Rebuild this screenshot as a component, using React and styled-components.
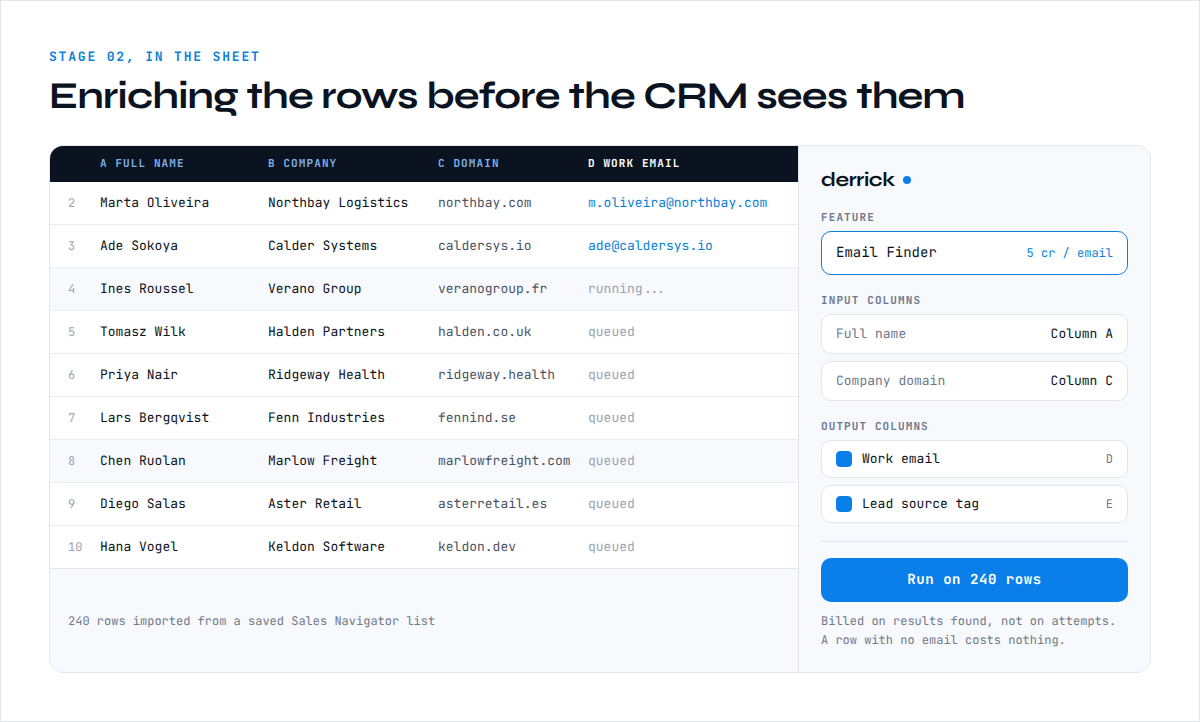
import React, { useState } from "react";
import styled, { createGlobalStyle, ThemeProvider } from "styled-components";

const theme = {
  ink: "#0b1220",
  blue: "#0a7fea",
  blueText: "#0a7fd8",
  headBlue: "#7fb0ea",
  body: "#4b5363",
  muted: "#6f7889",
  faint: "#9aa3b2",
  line: "#e0e5ed",
  rowLine: "#ebeff5",
  tint: "#f7f9fd",
  mono: '"JetBrains Mono", "DejaVu Sans Mono", "Liberation Mono", monospace',
  display: '"Syne", "Inter", "Liberation Sans", sans-serif',
};

const GlobalStyle = createGlobalStyle`
  *, *::before, *::after { box-sizing: border-box; }
  body { margin: 0; background: #fff; text-rendering: geometricPrecision; }
  button, input, select { font: inherit; color: inherit; margin: 0; text-rendering: inherit; }
`;

const Page = styled.main`
  display: flex;
  flex-direction: column;
  min-height: 100vh;
  padding: 48px;
  border: 1px solid #e3e5e8;
  font-family: ${({ theme }) => theme.mono};
  font-size: 13px;
  line-height: 18px;
  color: ${({ theme }) => theme.ink};
`;

const Heading = styled.header`
  display: flex;
  flex-direction: column;
  gap: 10px;
  margin-bottom: 26px;
`;

const Eyebrow = styled.p`
  margin: 0;
  font-weight: 600;
  line-height: 16px;
  letter-spacing: 0.14em;
  text-transform: uppercase;
  color: ${({ theme }) => theme.blueText};
`;

const Title = styled.h1`
  margin: 0;
  font-family: ${({ theme }) => theme.display};
  font-size: 38px;
  font-weight: 700;
  line-height: 44px;
  letter-spacing: -0.02em;
`;

const Panel = styled.section`
  display: grid;
  grid-template-columns: minmax(0, 1fr) 352px;
  flex: 1;
  border: 1px solid ${({ theme }) => theme.line};
  border-radius: 14px;
  overflow: hidden;
`;

const Sheet = styled.div`
  display: flex;
  flex-direction: column;
`;

const Table = styled.table`
  width: 100%;
  table-layout: fixed;
  border-spacing: 0;
`;

const Col = styled.col`
  width: ${({ $width }) => $width};
`;

const HeadCell = styled.th`
  height: 36px;
  padding: 0;
  background: ${({ theme }) => theme.ink};
  color: ${({ theme, $active }) => ($active ? "#fff" : theme.headBlue)};
  font-size: 11px;
  font-weight: 600;
  line-height: 16px;
  letter-spacing: 0.1em;
  text-align: left;
  text-transform: uppercase;
  white-space: nowrap;
`;

const Row = styled.tr`
  background: ${({ theme, $tinted }) => ($tinted ? theme.tint : "#fff")};

  &:last-child > * {
    border-bottom-color: ${({ theme }) => theme.line};
  }
`;

const Cell = styled.td`
  height: 43px;
  padding: 0;
  border-bottom: 1px solid ${({ theme }) => theme.rowLine};
  color: ${({ theme, $tone }) => theme[$tone || "ink"]};
  white-space: nowrap;
`;

const RowNumber = styled(Cell).attrs({ as: "th", scope: "row" })`
  padding-left: 18px;
  font-size: 12px;
  font-weight: 400;
  text-align: left;
  color: ${({ theme }) => theme.faint};
`;

const EmailLink = styled.a`
  color: ${({ theme }) => theme.blueText};
  text-decoration: none;
`;

const SheetFooter = styled.footer`
  display: flex;
  flex: 1;
  align-items: center;
  padding: 18px;
  background: ${({ theme }) => theme.tint};
  color: ${({ theme }) => theme.muted};
  font-size: 12px;
`;

const Sidebar = styled.aside`
  display: flex;
  flex-direction: column;
  gap: 18px;
  padding: 22px;
  border-left: 1px solid ${({ theme }) => theme.line};
  background: ${({ theme }) => theme.tint};
`;

const Brand = styled.div`
  display: flex;
  align-items: center;
  gap: 8px;
  font-family: ${({ theme }) => theme.display};
  font-size: 20px;
  font-weight: 700;
  line-height: 24px;
  letter-spacing: -0.02em;

  &::after {
    content: "";
    width: 8px;
    height: 8px;
    border-radius: 50%;
    background: ${({ theme }) => theme.blue};
  }
`;

const Group = styled.div`
  display: flex;
  flex-direction: column;
  gap: 7px;
`;

const GroupLabel = styled.span`
  margin-bottom: -2px;
  font-size: 11px;
  font-weight: 600;
  line-height: 16px;
  letter-spacing: 0.1em;
  text-transform: uppercase;
  color: ${({ theme }) => theme.muted};
`;

const Field = styled.label`
  display: flex;
  align-items: center;
  gap: 10px;
  height: ${({ $height }) => $height};
  padding: 0 14px;
  border: 1px solid ${({ theme, $active }) => ($active ? theme.blueText : theme.line)};
  border-radius: 10px;
  background: #fff;
  color: ${({ theme, $muted }) => ($muted ? theme.muted : theme.ink)};
`;

const FieldText = styled.span`
  flex: 1;
`;

const Select = styled.select`
  appearance: none;
  padding: 0;
  border: 0;
  background: none;
  color: ${({ theme }) => theme.ink};
  cursor: pointer;
`;

const FeatureSelect = styled(Select)`
  flex: 1;
  min-width: 0;
  font-size: 14px;
`;

const ColumnSelect = styled(Select)`
  width: 96px;
  text-align-last: right;
`;

const Price = styled.span`
  font-size: 12px;
  color: ${({ theme }) => theme.blueText};
`;

const Checkbox = styled.input`
  appearance: none;
  width: 16px;
  height: 16px;
  border: 1px solid ${({ theme }) => theme.faint};
  border-radius: 4px;
  cursor: pointer;

  &:checked {
    border-color: ${({ theme }) => theme.blue};
    background: ${({ theme }) => theme.blue};
  }
`;

const ColumnLetter = styled.span`
  font-size: 12px;
  color: ${({ theme }) => theme.muted};
`;

const Actions = styled.div`
  display: flex;
  flex-direction: column;
  gap: 10px;
  padding-top: 16px;
  border-top: 1px solid ${({ theme }) => theme.line};
`;

const RunButton = styled.button`
  height: 44px;
  border: 0;
  border-radius: 10px;
  background: ${({ theme }) => theme.blue};
  color: #fff;
  font-size: 14px;
  font-weight: 600;
  letter-spacing: 0.04em;
  cursor: pointer;
`;

const Note = styled.p`
  margin: 0;
  font-size: 12px;
  line-height: 19px;
  color: ${({ theme }) => theme.muted};
`;

const rows = [
  { n: 2, name: "Marta Oliveira", company: "Northbay Logistics", domain: "northbay.com", email: "m.oliveira@northbay.com" },
  { n: 3, name: "Ade Sokoya", company: "Calder Systems", domain: "caldersys.io", email: "ade@caldersys.io" },
  { n: 4, name: "Ines Roussel", company: "Verano Group", domain: "veranogroup.fr", status: "running...", tinted: true },
  { n: 5, name: "Tomasz Wilk", company: "Halden Partners", domain: "halden.co.uk", status: "queued" },
  { n: 6, name: "Priya Nair", company: "Ridgeway Health", domain: "ridgeway.health", status: "queued" },
  { n: 7, name: "Lars Bergqvist", company: "Fenn Industries", domain: "fennind.se", status: "queued" },
  { n: 8, name: "Chen Ruolan", company: "Marlow Freight", domain: "marlowfreight.com", status: "queued", tinted: true },
  { n: 9, name: "Diego Salas", company: "Aster Retail", domain: "asterretail.es", status: "queued" },
  { n: 10, name: "Hana Vogel", company: "Keldon Software", domain: "keldon.dev", status: "queued" },
];

const columns = ["A", "B", "C", "D"];

function InputColumn({ label, initial }) {
  const [value, setValue] = useState(initial);
  return (
    <Field $height="40px" $muted>
      <FieldText>{label}</FieldText>
      <ColumnSelect value={value} onChange={(e) => setValue(e.target.value)}>
        {columns.map((c) => (
          <option key={c} value={c}>{`Column ${c}`}</option>
        ))}
      </ColumnSelect>
    </Field>
  );
}

function OutputColumn({ label, letter }) {
  return (
    <Field $height="38px">
      <Checkbox type="checkbox" defaultChecked />
      <FieldText>{label}</FieldText>
      <ColumnLetter>{letter}</ColumnLetter>
    </Field>
  );
}

export default function App() {
  return (
    <ThemeProvider theme={theme}>
      <GlobalStyle />
      <Page>
        <Heading>
          <Eyebrow>Stage 02, in the sheet</Eyebrow>
          <Title>Enriching the rows before the CRM sees them</Title>
        </Heading>
        <Panel>
          <Sheet>
            <Table>
              <colgroup>
                <Col $width="50px" />
                <Col $width="168px" />
                <Col $width="170px" />
                <Col $width="150px" />
                <Col $width="auto" />
              </colgroup>
              <thead>
                <tr>
                  <HeadCell as="td" />
                  <HeadCell scope="col">A Full name</HeadCell>
                  <HeadCell scope="col">B Company</HeadCell>
                  <HeadCell scope="col">C Domain</HeadCell>
                  <HeadCell scope="col" $active>D Work email</HeadCell>
                </tr>
              </thead>
              <tbody>
                {rows.map((r) => (
                  <Row key={r.n} $tinted={r.tinted}>
                    <RowNumber>{r.n}</RowNumber>
                    <Cell>{r.name}</Cell>
                    <Cell>{r.company}</Cell>
                    <Cell $tone="body">{r.domain}</Cell>
                    <Cell $tone="faint">
                      {r.email ? <EmailLink href={`mailto:${r.email}`}>{r.email}</EmailLink> : r.status}
                    </Cell>
                  </Row>
                ))}
              </tbody>
            </Table>
            <SheetFooter>240 rows imported from a saved Sales Navigator list</SheetFooter>
          </Sheet>
          <Sidebar>
            <Brand>derrick</Brand>
            <Group>
              <GroupLabel id="feature-label">Feature</GroupLabel>
              <Field $height="44px" $active>
                <FeatureSelect aria-labelledby="feature-label">
                  <option>Email Finder</option>
                </FeatureSelect>
                <Price>5 cr / email</Price>
              </Field>
            </Group>
            <Group role="group" aria-labelledby="input-label">
              <GroupLabel id="input-label">Input columns</GroupLabel>
              <InputColumn label="Full name" initial="A" />
              <InputColumn label="Company domain" initial="C" />
            </Group>
            <Group role="group" aria-labelledby="output-label">
              <GroupLabel id="output-label">Output columns</GroupLabel>
              <OutputColumn label="Work email" letter="D" />
              <OutputColumn label="Lead source tag" letter="E" />
            </Group>
            <Actions>
              <RunButton type="button">Run on 240 rows</RunButton>
              <Note>Billed on results found, not on attempts. A row with no email costs nothing.</Note>
            </Actions>
          </Sidebar>
        </Panel>
      </Page>
    </ThemeProvider>
  );
}
